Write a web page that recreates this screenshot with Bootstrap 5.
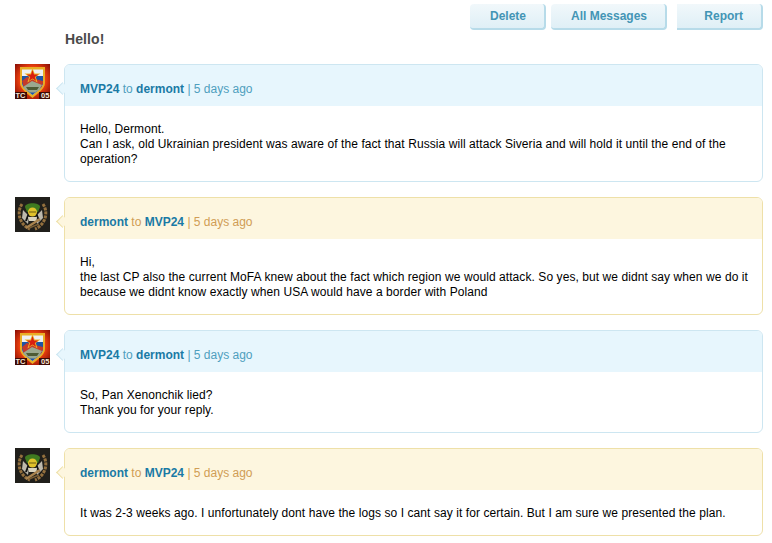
<!DOCTYPE html>
<html lang="en">
<head>
<meta charset="utf-8">
<title>Messages</title>
<link href="https://cdn.jsdelivr.net/npm/bootstrap@5.3.0/dist/css/bootstrap.min.css" rel="stylesheet">
<style>
body{font-family:"Liberation Sans",Arial,sans-serif;font-size:12px;line-height:15px;color:#000;background:#fff;padding:4px 9px 0 15px;overflow:hidden}
.top-actions{gap:5px;height:26px}
.act-btn{height:26px;border:0;border-right:2px solid #b7dbe9;border-bottom:2px solid #b7dbe9;border-radius:4px;background:linear-gradient(#f1f8fb,#dfeff6);color:#4395b5;font-weight:700;font-size:12px;line-height:15px;padding:0 0 0 2px}
.act-del{width:76px}
.act-all{width:116px}
.act-rep{width:86px;margin-left:5px;border-top-left-radius:0;border-bottom-left-radius:0;text-align:right;padding-right:18px}
.subject-line{margin:0 0 0 50px;font-size:14px;font-weight:700;line-height:16px;color:#4a4a4a;height:34px;padding-top:1px;letter-spacing:.1px}
.msg-row{margin-bottom:15px}
.avatar-box{width:35px;height:35px;flex:none;display:block}
.bubble{margin-left:14px;flex:1 1 0;border:1px solid #cde6f1;border-radius:6px;position:relative;min-width:0}
.bubble::before{content:"";position:absolute;left:-7px;top:19px;width:9px;height:9px;transform:rotate(45deg);background:#e7f6fd;border-left:1px solid #cde6f1;border-bottom:1px solid #cde6f1}
.bubble-head{height:41px;padding:17px 15px 0;background:#e7f6fd;border-radius:5px 5px 0 0;color:#4f9fbd;position:relative}
.bubble-head b{color:#1a7aa5}
.bubble-text{padding:16px 8px 14px 15px;margin:0;letter-spacing:.075px}
.tone-y{border-color:#eee0a8}
.tone-y::before{background:#fdf6df;border-color:#eee0a8}
.tone-y .bubble-head{background:#fdf6df;color:#d09d55}
</style>
</head>
<body>
<div class="d-flex justify-content-end top-actions">
<button class="act-btn act-del" type="button">Delete</button>
<button class="act-btn act-all" type="button">All Messages</button>
<button class="act-btn act-rep" type="button">Report</button>
</div>
<h1 class="subject-line">Hello!</h1>

<svg width="0" height="0" class="position-absolute" aria-hidden="true">
<defs>
<radialGradient id="glow" cx="50%" cy="45%" r="65%"><stop offset="55%" stop-color="#f0420e"/><stop offset="100%" stop-color="#8c0f06"/></radialGradient>
<symbol id="av-red" viewBox="0 0 35 35">
<rect width="35" height="35" fill="url(#glow)"/>
<path d="M5 3H30V19C30 25 22 30 17.500 34 13 30 5 25 5 19Z" fill="#e9ad25"/>
<path d="M7 5.500H28V19C28 24 21 28 17.500 31 14 28 7 24 7 19Z" fill="#eef0f2"/>
<path d="M7 12H28V19C28 24 21 28 17.500 31 14 28 7 24 7 19Z" fill="#1d55a6"/>
<path d="M7 17L12 13 28 17V19L26 24 9 24Z" fill="#c43a2a"/>
<path d="M8 23L17 17 27 21 24 26 20 28.500H15L11 26Z" fill="#9aa88f"/>
<path d="M11 23H24L22 26H13Z" fill="#4d5b35"/>
<path d="M17.500 4L19.600 9.500 25.500 9.500 20.800 13 22.600 18.500 17.500 15.200 12.400 18.500 14.200 13 9.500 9.500 15.400 9.500Z" fill="#f2b423"/>
<path d="M17.500 6L19 10.500 23.500 10.500 19.800 13 21.200 17 17.500 14.500 13.800 17 15.200 13 11.500 10.500 16 10.500Z" fill="#d91f10"/>
<rect y="28" width="12" height="7" fill="#3d0a05"/>
<rect x="24" y="28" width="11" height="7" fill="#3d0a05"/>
<text x="0.500" y="34" font-family="Liberation Sans" font-size="7.500" font-weight="700" fill="#f4e7d8">TC</text>
<text x="26" y="34" font-family="Liberation Sans" font-size="7.500" font-weight="700" fill="#f4e7d8">05</text>
</symbol>
<symbol id="av-dark" viewBox="0 0 35 35">
<rect width="35" height="35" fill="#201f1b"/>
<path d="M7 7C1 16 5 28 15 32M28 7C34 16 30 28 20 32" fill="none" stroke="#94703e" stroke-width="3" stroke-dasharray="3 1"/>
<path d="M8 13L14 19 13 27 7 21ZM27 13L21 19 22 27 28 21Z" fill="#bdb9ad"/>
<path d="M14 16L11 24M21 16L24 24" stroke="#111" stroke-width="2"/>
<path d="M10 10C10 5 25 5 25 10L23 15H12Z" fill="#3f7a20"/>
<circle cx="17.500" cy="15" r="4.500" fill="#e0c22b"/>
<path d="M14 15H21" stroke="#6b5a10"/>
<path d="M13 20H22L21 24H14Z" fill="#d9d3bd"/>
<path d="M11 31L25 22" stroke="#a8834e" stroke-width="2.500"/>
<path d="M14 31L24 27" stroke="#7a5e34" stroke-width="1.500"/>
</symbol>
</defs>
</svg>

<div class="d-flex msg-row">
<svg class="avatar-box" viewBox="0 0 35 35" role="img" aria-label="MVP24"><use href="#av-red"/></svg>
<div class="bubble">
<div class="bubble-head"><b>MVP24</b> to <b>dermont</b> | 5 days ago</div>
<p class="bubble-text">Hello, Dermont.<br>Can I ask, old Ukrainian president was aware of the fact that Russia will attack Siveria and will hold it until the end of the operation?</p>
</div>
</div>

<div class="d-flex msg-row">
<svg class="avatar-box" viewBox="0 0 35 35" role="img" aria-label="dermont"><use href="#av-dark"/></svg>
<div class="bubble tone-y">
<div class="bubble-head"><b>dermont</b> to <b>MVP24</b> | 5 days ago</div>
<p class="bubble-text">Hi,<br>the last CP also the current MoFA knew about the fact which region we would attack. So yes, but we didnt say when we do it because we didnt know exactly when USA would have a border with Poland</p>
</div>
</div>

<div class="d-flex msg-row">
<svg class="avatar-box" viewBox="0 0 35 35" role="img" aria-label="MVP24"><use href="#av-red"/></svg>
<div class="bubble">
<div class="bubble-head"><b>MVP24</b> to <b>dermont</b> | 5 days ago</div>
<p class="bubble-text">So, Pan Xenonchik lied?<br>Thank you for your reply.</p>
</div>
</div>

<div class="d-flex msg-row">
<svg class="avatar-box" viewBox="0 0 35 35" role="img" aria-label="dermont"><use href="#av-dark"/></svg>
<div class="bubble tone-y">
<div class="bubble-head"><b>dermont</b> to <b>MVP24</b> | 5 days ago</div>
<p class="bubble-text">It was 2-3 weeks ago. I unfortunately dont have the logs so I cant say it for certain. But I am sure we presented the plan.</p>
</div>
</div>
</body>
</html>
